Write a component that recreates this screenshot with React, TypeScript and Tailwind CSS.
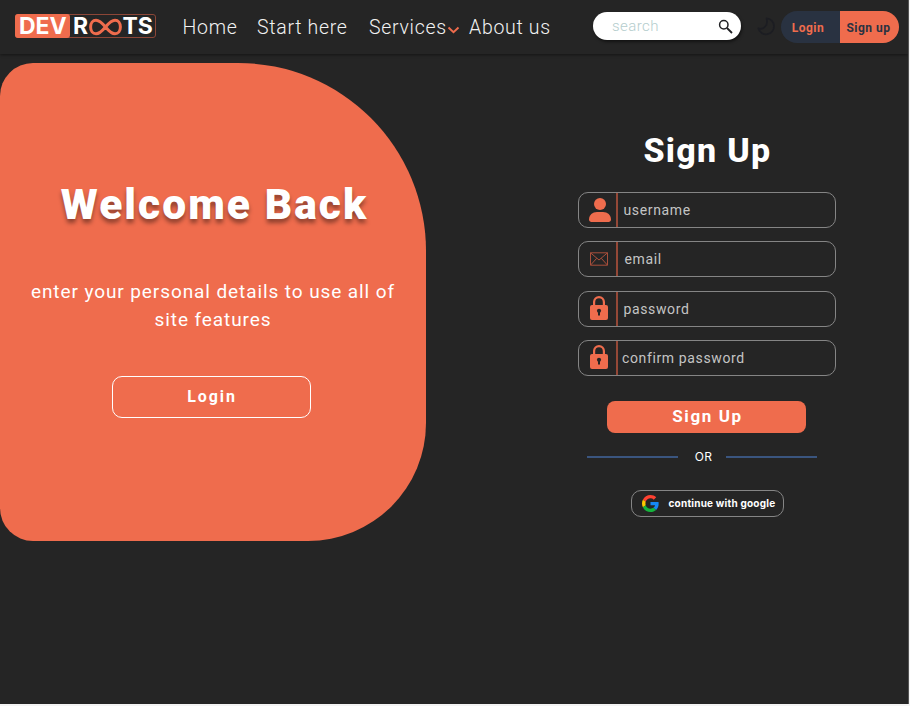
import React from "react";

function Logo() {
  return (
    <div className="mt-[14px] ml-[15px] flex h-6 w-[141px] shrink-0 rounded-[3px] border border-[#8c4637] font-['Inter',sans-serif] text-[23px] leading-[23px] font-bold text-white">
      <div className="-my-px -ml-px flex h-6 w-[55px] shrink-0 items-center rounded-[3px] bg-[#ef6c4d] pt-px pl-[4px] tracking-[-0.1px]">
        DEV
      </div>
      <div className="flex items-center pt-px pl-[3px]">
        <span className="w-[15.500px]">R</span>
        <svg width="33" height="18" viewBox="0 0 33 18" className="shrink-0" fill="none">
          <path
            d="M16.500 9C13 4.800 10.500 2.200 7 2.200C3.800 2.200 1.600 5 1.600 9S3.800 15.800 7 15.800C10.500 15.800 13 13.200 16.500 9S22.500 2.200 26 2.200C29.200 2.200 31.400 5 31.400 9S29.200 15.800 26 15.800C22.500 15.800 20 13.200 16.500 9Z"
            stroke="#ef6c4d"
            strokeWidth="3"
          />
        </svg>
        <span className="pl-[1px]">TS</span>
      </div>
    </div>
  );
}

function Header() {
  return (
    <header className="flex h-[54px] w-full items-start shadow-[0_1px_3px_rgba(0,0,0,0.45)]">
      <Logo />
      <nav className="flex h-[54px] shrink-0 items-center pt-px pl-[26.500px] text-[19.500px] font-light tracking-[0.700px] whitespace-nowrap text-[#f2f2f2]">
        <a className="w-[74.500px]">Home</a>
        <a className="w-[112px]">Start here</a>
        <a className="w-[78px]">Services</a>
        <svg width="14" height="10" viewBox="0 0 14 10" className="mt-[4px] w-[14px] shrink-0" fill="none">
          <path d="M1.500 2.500L6.500 7.300L11.500 2.500" stroke="#ef6c4d" strokeWidth="1.900" />
        </svg>
        <a className="ml-[8px] w-[124px]">About us</a>
      </nav>
      <div className="mt-[12px] flex h-[28px] w-[148px] shrink-0 items-center justify-between rounded-full bg-white pr-[8px] pl-[19px] shadow-[1px_2px_3px_rgba(0,0,0,0.5)]">
        <span className="text-[15px] font-light tracking-[0.450px] text-[#b4cdcd]">search</span>
        <svg width="15" height="15" viewBox="0 0 15 15" fill="none" stroke="#202124" strokeWidth="1.500">
          <circle cx="5.800" cy="5.800" r="4.200" />
          <path d="M9 9L14 14" strokeWidth="1.800" />
        </svg>
      </div>
      <svg width="20" height="20" viewBox="0 0 20 20" className="mt-[16px] ml-[14.500px] shrink-0" fill="none">
        <path
          d="M10.500 2.300A8 8 0 1 1 2.300 12.300C7 14.300 12.800 9.600 10.500 2.300Z"
          stroke="#1c1d22"
          strokeWidth="1.700"
          strokeLinejoin="round"
        />
      </svg>
      <div className="mt-[11px] ml-[5px] flex h-8 w-[118px] shrink-0 overflow-hidden rounded-full text-[12px] font-bold tracking-[0.5px] whitespace-nowrap">
        <button className="w-[59px] bg-[#293241] pt-px pr-[4px] text-center text-[#ef6c4d]">Login</button>
        <button className="w-[59px] bg-[#ef6c4d] pt-px pr-px text-center tracking-[0.5px] text-[#293241]">Sign up</button>
      </div>
    </header>
  );
}

function UserIcon() {
  return (
    <svg width="22" height="24" viewBox="0 0 22 24" fill="#ef6c4d">
      <circle cx="11" cy="6" r="6" />
      <path d="M0 21.500C0 17 3.500 14 8 14H14C18.500 14 22 17 22 21.500C22 23 21 24 19.500 24H2.500C1 24 0 23 0 21.500Z" />
    </svg>
  );
}

function MailIcon() {
  return (
    <svg width="18" height="14" viewBox="0 0 18 14" fill="none" stroke="#a94f3b" strokeWidth="1">
      <path d="M.5 .8H17.500V13.200H.5ZM.5 .8L9 8L17.500 .8M.5 13.200L6.700 6.300M17.500 13.200L11.300 6.300" />
    </svg>
  );
}

function LockIcon() {
  return (
    <svg width="18" height="24" viewBox="0 0 18 24" fill="none" className="-mt-[2px]">
      <path d="M4.100 10V6A4.900 4.900 0 0 1 13.900 6V10" stroke="#ef6c4d" strokeWidth="2.200" />
      <rect y="9" width="18" height="15" rx="2" fill="#ef6c4d" />
      <circle cx="9" cy="14.800" r="2.100" fill="#252525" />
      <path d="M8 15H10V19.500H8Z" fill="#252525" />
    </svg>
  );
}

type FieldProps = { icon: React.ReactNode; label: string; cell: string; pad: string };

function Field({ icon, label, cell, pad }: FieldProps) {
  return (
    <div className="flex h-9 w-[258px] overflow-hidden rounded-[10px] border border-[#858585]">
      <div className={`flex shrink-0 items-center border-r-2 border-[#944837] ${cell}`}>{icon}</div>
      <span className={`flex items-center pt-px text-[14px] tracking-[0.630px] text-[#c4c4c4] ${pad}`}>{label}</span>
    </div>
  );
}

function GoogleIcon() {
  return (
    <svg width="17" height="17" viewBox="0 0 48 48" className="shrink-0">
      <path fill="#FF4131" d="M24 9.500c3.500 0 6.700 1.200 9.200 3.600l6.900-6.900C35.900 2.400 30.500 0 24 0 14.600 0 6.500 5.400 2.600 13.200l8 6.200C12.400 13.700 17.700 9.500 24 9.500z" />
      <path fill="#1688F5" d="M47 24.500c0-1.600-.2-3.100-.4-4.500H24v9h12.900c-.6 3-2.300 5.500-4.800 7.200l7.700 6c4.500-4.200 7.200-10.300 7.200-17.700z" />
      <path fill="#FFC800" d="M10.500 28.600c-.5-1.500-.8-3-.8-4.600s.3-3.100.8-4.600l-8-6.200A24 24 0 0 0 0 24c0 3.900.9 7.500 2.600 10.800l7.900-6.200z" />
      <path fill="#15B33D" d="M24 48c6.500 0 11.900-2.100 15.900-5.800l-7.700-6c-2.200 1.500-4.900 2.300-8.200 2.300-6.300 0-11.600-4.200-13.500-9.900l-8 6.200C6.500 42.600 14.600 48 24 48z" />
    </svg>
  );
}

function WelcomePanel() {
  return (
    <section className="mt-[9px] flex h-[478px] w-[426px] shrink-0 flex-col items-center rounded-tl-[33px] rounded-tr-[188px] rounded-br-[118px] rounded-bl-[33px] bg-[#ef6c4d] text-white">
      <h1 className="mt-[115px] ml-[3px] text-[42.500px] leading-[53px] font-black tracking-[2.050px] whitespace-nowrap [text-shadow:0_4px_4px_rgba(0,0,0,0.4)]">
        Welcome Back
      </h1>
      <p className="mt-[47px] w-[390px] text-center text-[19px] leading-[28px] tracking-[0.910px]">
        enter your personal details to use all of
        <br />
        site features
      </p>
      <button className="mt-[42px] mr-[4px] h-[42px] w-[199px] rounded-[10px] border-[1.500px] border-white pl-[2px] text-[16px] font-bold tracking-[1.900px]">
        Login
      </button>
    </section>
  );
}

function SignUpForm() {
  return (
    <section className="ml-[151px] flex w-[259px] flex-col items-center">
      <h2 className="mt-[74px] ml-[2px] text-[34px] leading-[44px] font-extrabold tracking-[1.300px] whitespace-nowrap text-white">
        Sign Up
      </h2>
      <div className="mt-[20px] flex flex-col gap-[13.330px]">
        <Field icon={<UserIcon />} label="username" cell="w-[39px] pl-[10px]" pad="pl-[6px]" />
        <Field icon={<MailIcon />} label="email" cell="w-[39px] pl-[11px]" pad="pl-[7px]" />
        <Field icon={<LockIcon />} label="password" cell="w-[39px] pl-[11px]" pad="pl-[6px]" />
        <Field icon={<LockIcon />} label="confirm password" cell="w-[39px] pl-[11px]" pad="pl-[4.500px]" />
      </div>
      <button className="mt-[25px] h-8 w-[199px] rounded-[8px] bg-[#ef6c4d] pl-[2px] text-[17px] font-bold tracking-[1.600px] text-white">
        Sign Up
      </button>
      <div className="mt-[16px] ml-[10px] flex h-[16px] w-[230px] items-center justify-between self-start">
        <div className="h-[1.500px] w-[91px] bg-[#3a557f]" />
        <span className="pl-[3px] font-['Inter',sans-serif] text-[12px] tracking-[0.300px] text-white">OR</span>
        <div className="h-[1.500px] w-[91px] bg-[#3a557f]" />
      </div>
      <button className="mt-[25px] ml-px flex h-[27px] w-[153px] items-center rounded-[10px] border border-[#858585] pl-[10px] font-['Inter',sans-serif] text-[10px] font-bold tracking-[0.220px] whitespace-nowrap text-white">
        <GoogleIcon />
        <span className="pl-[10px]">continue with google</span>
      </button>
    </section>
  );
}

export default function App() {
  return (
    <div className="h-[706px] w-[910px] overflow-hidden bg-[#f4f4f4] font-['Roboto',sans-serif]">
      <div className="h-[704px] w-[909px] overflow-hidden border-r border-[#555555] bg-[#252525]">
        <Header />
        <main className="flex items-start">
          <WelcomePanel />
          <SignUpForm />
        </main>
      </div>
    </div>
  );
}
